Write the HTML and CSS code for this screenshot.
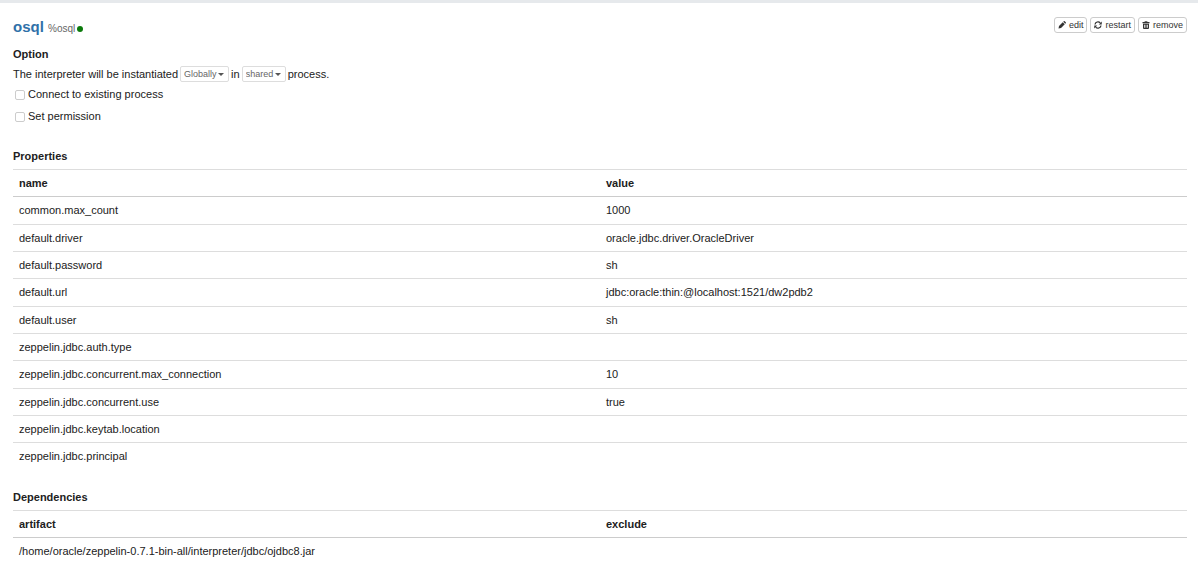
FILE: index.html
```html
<!DOCTYPE html>
<html lang="en">
<head>
    <meta charset="UTF-8">
    <title>Interpreter</title>
    <link rel="stylesheet" href="styles.css">
</head>
<body>
<div class="interpreter">
    <div class="header">
        <h3 class="name">osql <small>%osql</small><span class="status"></span></h3>
        <div class="actions">
            <button type="button" class="btn">
                <svg class="icon" viewBox="0 0 16 16"><path d="M1 15l1-5 7.500-7.500 4 4L6 14zM10.500 1.500l1-1q1-.8 2 0l2 2q.8 1 0 2l-1 1z"/></svg>
                edit
            </button>
            <button type="button" class="btn">
                <svg class="icon" viewBox="0 0 16 16"><path class="line" d="M2 7a6 6 0 0 1 10.500-3.200M14 9a6 6 0 0 1-10.500 3.200"/><path d="M15.500 1v6h-6zM.5 15V9h6z"/></svg>
                restart
            </button>
            <button type="button" class="btn">
                <svg class="icon" viewBox="0 0 16 16"><path fill-rule="evenodd" d="M5 2l1-2h4l1 2h4v2.500H1V2zM6.500 2h3L9 1H7zM2 5.500h12V14q0 2-2 2H4q-2 0-2-2zM4.500 7.500v6H6v-6zM7.300 7.500v6h1.400v-6zM10 7.500v6h1.500v-6z"/></svg>
                remove
            </button>
        </div>
    </div>

    <h5>Option</h5>
    <div class="option">
        <span>The interpreter will be instantiated</span>
        <select class="scope" aria-label="Scope">
            <option>Globally</option>
            <option>Per Note</option>
            <option>Per User</option>
        </select>
        <span>in</span>
        <select class="mode" aria-label="Mode">
            <option>shared</option>
            <option>scoped</option>
            <option>isolated</option>
        </select>
        <span>process.</span>
    </div>
    <div class="checkbox">
        <input type="checkbox" id="existing">
        <label for="existing">Connect to existing process</label>
    </div>
    <div class="checkbox">
        <input type="checkbox" id="permission">
        <label for="permission">Set permission</label>
    </div>

    <h5 class="section">Properties</h5>
    <table>
        <thead>
        <tr><th>name</th><th>value</th></tr>
        </thead>
        <tbody>
        <tr><td>common.max_count</td><td>1000</td></tr>
        <tr><td>default.driver</td><td>oracle.jdbc.driver.OracleDriver</td></tr>
        <tr><td>default.password</td><td>sh</td></tr>
        <tr><td>default.url</td><td>jdbc:oracle:thin:@localhost:1521/dw2pdb2</td></tr>
        <tr><td>default.user</td><td>sh</td></tr>
        <tr><td>zeppelin.jdbc.auth.type</td><td></td></tr>
        <tr><td>zeppelin.jdbc.concurrent.max_connection</td><td>10</td></tr>
        <tr><td>zeppelin.jdbc.concurrent.use</td><td>true</td></tr>
        <tr><td>zeppelin.jdbc.keytab.location</td><td></td></tr>
        <tr><td>zeppelin.jdbc.principal</td><td></td></tr>
        </tbody>
    </table>

    <h5 class="section">Dependencies</h5>
    <table>
        <thead>
        <tr><th>artifact</th><th>exclude</th></tr>
        </thead>
        <tbody>
        <tr><td>/home/oracle/zeppelin-0.7.1-bin-all/interpreter/jdbc/ojdbc8.jar</td><td></td></tr>
        </tbody>
    </table>
</div>
</body>
</html>
```
FILE: styles.css
```css
*{margin:0;padding:0;box-sizing:border-box;}
body{background:#fff;color:#212121;font:11px/15px "Liberation Sans",Arial,sans-serif;}
.interpreter{padding:14px 11px 0 13px;border-top:3px solid #e6e9ec;}
.header{display:flex;justify-content:space-between;align-items:flex-start;}
.name{color:#3071a9;font-size:15px;line-height:19px;}
.name small{color:#666;font-size:10px;font-weight:normal;}
.status{display:inline-block;width:6px;height:6px;margin-left:2px;border-radius:50%;background:#0b7a0b;}
.actions{display:flex;gap:3px;}
.btn{display:flex;align-items:center;gap:3px;height:16px;padding:0 3px;border:1px solid #ccc;border-radius:3px;background:#fff;color:#333;font:9px/14px "Liberation Sans",Arial,sans-serif;}
.icon{width:8px;height:8px;fill:#333;}
.icon .line{fill:none;stroke:#333;stroke-width:2.5;}
h5{margin-top:9px;font-size:11px;line-height:15px;}
.option{display:flex;align-items:center;gap:2px;margin-top:4px;}
select{height:16px;padding:0 3px;border:1px solid #ddd;border-radius:2px;color:#666;font:9px/14px "Liberation Sans",Arial,sans-serif;appearance:none;background:#fff url("data:image/svg+xml,%3Csvg xmlns='http://www.w3.org/2000/svg' width='6' height='3'%3E%3Cpath d='M0 0h6L3 3z' fill='%23555'/%3E%3C/svg%3E") no-repeat right 4px center;}
.scope{width:49px;}
.mode{width:44px;}
.checkbox{display:flex;align-items:center;gap:3px;margin:5px 0 7px 2px;}
.checkbox input{width:10px;height:10px;border:1px solid #ccc;border-radius:2px;background:#fff;appearance:none;}
.checkbox input:checked{background:#3071a9;}
.section{margin:20px 0 5px;}
.checkbox + .section{margin-top:25px;}
table{width:100%;table-layout:fixed;border-collapse:separate;border-spacing:0;}
th,td{height:27px;padding:5px 6px;border-top:1px solid #ddd;text-align:left;}
th{height:28px;border-bottom:1px solid #ccc;}
tbody tr:nth-child(3n+1) td{height:28px;}
tbody tr:first-child td{height:27px;border-top:0;}
```
